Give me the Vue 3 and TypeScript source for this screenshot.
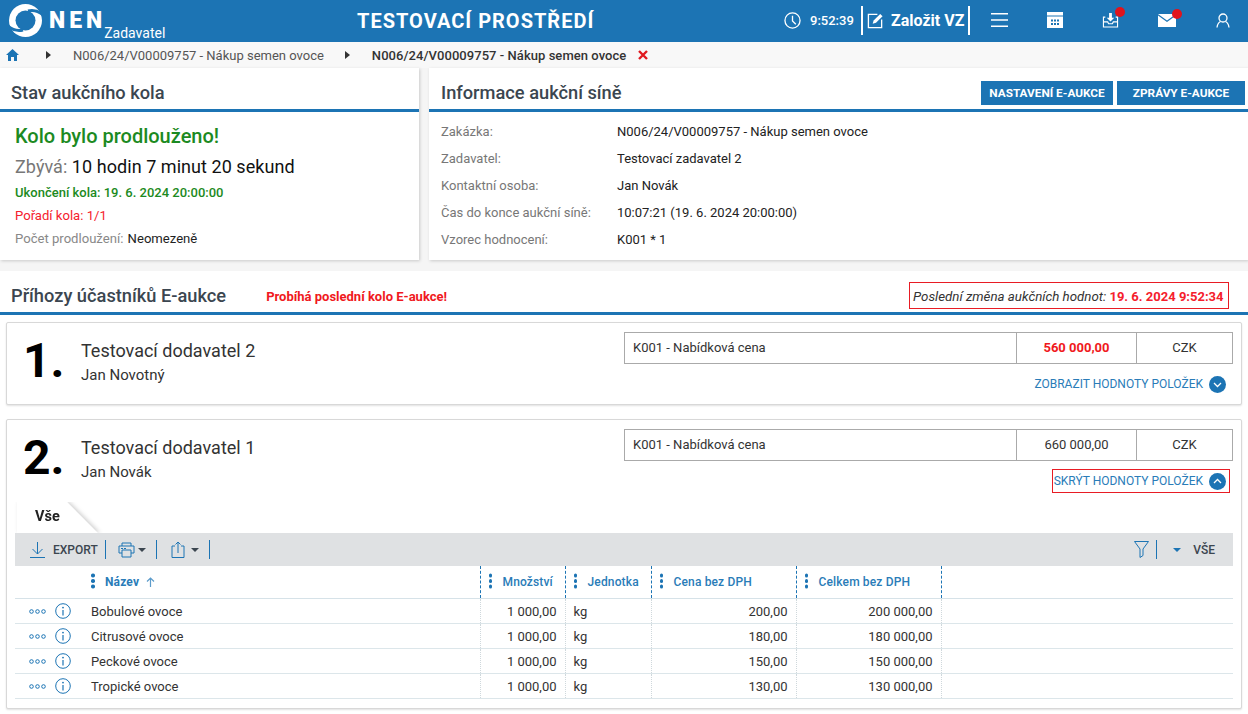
<script setup lang="ts">
interface Row { name: string; qty: string; unit: string; price: string; total: string }
const rows: Row[] = [
  { name: 'Bobulové ovoce', qty: '1 000,00', unit: 'kg', price: '200,00', total: '200 000,00' },
  { name: 'Citrusové ovoce', qty: '1 000,00', unit: 'kg', price: '180,00', total: '180 000,00' },
  { name: 'Peckové ovoce', qty: '1 000,00', unit: 'kg', price: '150,00', total: '150 000,00' },
  { name: 'Tropické ovoce', qty: '1 000,00', unit: 'kg', price: '130,00', total: '130 000,00' },
]
const info: [string, string][] = [
  ['Zakázka:', 'N006/24/V00009757 - Nákup semen ovoce'],
  ['Zadavatel:', 'Testovací zadavatel 2'],
  ['Kontaktní osoba:', 'Jan Novák'],
  ['Čas do konce aukční síně:', '10:07:21 (19. 6. 2024 20:00:00)'],
  ['Vzorec hodnocení:', 'K001 * 1'],
]
</script>

<template>
  <div class="page">
    <header class="top">
      <div class="brand">
        <svg class="logo" viewBox="0 0 33 33" width="33" height="33">
          <circle cx="16.500" cy="16.500" r="16.500" fill="#fff" />
          <circle cx="16.500" cy="16.500" r="10" fill="#1c74b4" />
          <path d="M19 7 Q27 5 34 11" fill="none" stroke="#1c74b4" stroke-width="3" />
          <path d="M14 26 Q6 28 -1 22" fill="none" stroke="#1c74b4" stroke-width="3" />
        </svg>
        <span class="nen">NEN</span>
        <span class="role">Zadavatel</span>
      </div>
      <div class="env">TESTOVACÍ PROSTŘEDÍ</div>
      <div class="tools">
        <svg class="clock" viewBox="0 0 18 18" width="17" height="17"><circle cx="9" cy="9" r="8" fill="none" stroke="#fff" stroke-width="1.400"/><path d="M9 4V9.500L12.500 13" fill="none" stroke="#fff" stroke-width="1.400"/></svg>
        <span class="time">9:52:39</span>
        <div class="create">
          <svg viewBox="0 0 18 18" width="17" height="17"><path d="M11 2.500H1.500V16.500H15.500V8" fill="none" stroke="#fff" stroke-width="1.400"/><path d="M6 12.500L7 9L14 2L16.500 4.500L9.500 11.500Z" fill="#fff"/></svg>
          <span>Založit VZ</span>
        </div>
        <svg class="i-menu" viewBox="0 0 17 14" width="17" height="14"><path d="M0 0.800H17M0 7H17M0 13.200H17" stroke="#fff" stroke-width="1.500"/></svg>
        <svg class="i-cal" viewBox="0 0 16 16" width="16" height="16"><path d="M0 0H16V3.500H0Z M0 4.500H16V16H0Z" fill="#fff"/><path d="M4 7.500h2v2H4zM7 7.500h2v2H7zM10 7.500h2v2h-2zM4 11h2v2H4zM7 11h2v2H7zM10 11h2v2h-2z" fill="#1c74b4"/></svg>
        <div class="badged b-inbox">
          <svg viewBox="0 0 17 17" width="17" height="16"><path d="M3 5.500H1V16H16V5.500H14M1 10.500H5.500L6.500 12.500H10.500L11.500 10.500H16" fill="none" stroke="#fff" stroke-width="1.200"/><path d="M7 1H10V6H12.500L8.500 10L4.500 6H7Z" fill="#fff"/></svg>
          <i class="dot"></i>
        </div>
        <div class="badged b-mail">
          <svg viewBox="0 0 18 13" width="18" height="13"><path d="M0 0H18L9 6.500Z M0 1.500L9 8L18 1.500V13H0Z" fill="#fff"/></svg>
          <i class="dot"></i>
        </div>
        <svg class="i-user" viewBox="0 0 14 15" width="14" height="15"><circle cx="7" cy="5" r="4" fill="none" stroke="#fff" stroke-width="1.300"/><path d="M1 14.500C1.500 10.500 3.500 9 4.500 8.500M13 14.500C12.500 10.500 10.500 9 9.500 8.500" fill="none" stroke="#fff" stroke-width="1.300"/></svg>
      </div>
    </header>

    <nav class="crumbs">
      <svg class="home" viewBox="0 0 13 12" width="13" height="12"><path d="M6.500 0L13 6H11V12H8V8H5V12H2V6H0Z" fill="#1c74b4"/></svg>
      <span class="arrow a1"></span>
      <span class="crumb">N006/24/V00009757 - Nákup semen ovoce</span>
      <span class="arrow a2"></span>
      <strong class="crumb-b">N006/24/V00009757 - Nákup semen ovoce</strong>
      <svg class="close" viewBox="0 0 10 10" width="10" height="10"><path d="M1 1L9 9M9 1L1 9" stroke="#e0191f" stroke-width="2.400"/></svg>
    </nav>

    <section class="panels">
      <div class="panel left">
        <h2 class="ptitle">Stav aukčního kola</h2>
        <div class="left-body">
          <div class="big-green">Kolo bylo prodlouženo!</div>
          <div class="remain"><span>Zbývá:</span> 10 hodin 7 minut 20 sekund</div>
          <div class="l-row green">Ukončení kola: <b>19. 6. 2024 20:00:00</b></div>
          <div class="l-row red">Pořadí kola: 1/1</div>
          <div class="l-row grey">Počet prodloužení: <em>Neomezeně</em></div>
        </div>
      </div>
      <div class="panel right">
        <div class="ptitle rt">
          <h2>Informace aukční síně</h2>
          <div class="btns">
            <button class="btn b1">NASTAVENÍ E-AUKCE</button>
            <button class="btn b2">ZPRÁVY E-AUKCE</button>
          </div>
        </div>
        <div class="info">
          <div v-for="r in info" :key="r[0]" class="info-row">
            <span class="k">{{ r[0] }}</span><span class="v">{{ r[1] }}</span>
          </div>
        </div>
      </div>
    </section>

    <section class="bids">
      <div class="bids-head">
        <h2>Příhozy účastníků E-aukce</h2>
        <span class="last">Probíhá poslední kolo E-aukce!</span>
        <span class="changed"><i>Poslední změna aukčních hodnot:</i> <b>19. 6. 2024 9:52:34</b></span>
      </div>

      <article class="card c1">
        <div class="card-top">
          <div class="rank">1<span>.</span></div>
          <div class="who">
            <div class="sup">Testovací dodavatel 2</div>
            <div class="per">Jan Novotný</div>
          </div>
          <div class="side">
            <div class="vals">
              <span class="c-a">K001 - Nabídková cena</span>
              <span class="c-b win">560 000,00</span>
              <span class="c-c">CZK</span>
            </div>
            <div class="toggle">
              <span>ZOBRAZIT HODNOTY POLOŽEK</span>
              <svg viewBox="0 0 17 17" width="17" height="17"><circle cx="8.500" cy="8.500" r="8.500" fill="#1c74b4"/><path d="M5 7L8.500 10.500L12 7" fill="none" stroke="#fff" stroke-width="1.300"/></svg>
            </div>
          </div>
        </div>
      </article>

      <article class="card c2">
        <div class="card-top">
          <div class="rank">2<span>.</span></div>
          <div class="who">
            <div class="sup">Testovací dodavatel 1</div>
            <div class="per">Jan Novák</div>
          </div>
          <div class="side">
            <div class="vals">
              <span class="c-a">K001 - Nabídková cena</span>
              <span class="c-b">660 000,00</span>
              <span class="c-c">CZK</span>
            </div>
            <div class="toggle focus">
              <span>SKRÝT HODNOTY POLOŽEK</span>
              <svg viewBox="0 0 17 17" width="17" height="17"><circle cx="8.500" cy="8.500" r="8.500" fill="#1c74b4"/><path d="M5 10L8.500 6.500L12 10" fill="none" stroke="#fff" stroke-width="1.300"/></svg>
            </div>
          </div>
        </div>

        <div class="tabs"><div class="tab-shadow"><div class="tab">Vše</div></div></div>
        <div class="toolbar">
          <svg class="t-exp" viewBox="0 0 15 16" width="15" height="16"><path d="M7.500 0V12M2.500 7L7.500 12L12.500 7M0 15.500H15" fill="none" stroke="#1c74b4" stroke-width="1"/></svg>
          <span class="t-label">EXPORT</span>
          <i class="sep"></i>
          <svg class="t-print" viewBox="0 0 17 16" width="17" height="16"><path d="M4 4V1H13V4M4 11H1V4H16V11H13M4 8H13V15H4Z" fill="none" stroke="#1c74b4" stroke-width="1"/><path d="M3 6h2v1H3zM6 6h2v1H6z" fill="#1c74b4"/></svg>
          <i class="caret"></i>
          <i class="sep"></i>
          <svg class="t-share" viewBox="0 0 14 17" width="14" height="17"><path d="M4 5H1V16.500H13V5H10M7 12V1M4.500 3.500L7 1L9.500 3.500" fill="none" stroke="#1c74b4" stroke-width="1"/></svg>
          <i class="caret c-share"></i>
          <i class="sep"></i>
          <span class="grow"></span>
          <svg class="t-filter" viewBox="0 0 15 17" width="15" height="17"><path d="M0.500 0.500H14.500L9 8V14.500L6 16.500V8Z" fill="none" stroke="#1c74b4" stroke-width="1"/></svg>
          <i class="sep s-r"></i>
          <i class="caret blue"></i>
          <span class="t-label all">VŠE</span>
        </div>

        <table class="grid">
          <colgroup>
            <col class="w-a" /><col class="w-b" /><col class="w-c" /><col class="w-d" /><col class="w-e" /><col class="w-e" /><col />
          </colgroup>
          <thead>
            <tr>
              <th></th>
              <th><i class="dots"></i>Název<svg class="sort" viewBox="0 0 9 10" width="9" height="10"><path d="M4.500 10V1M1 4.500L4.500 1L8 4.500" fill="none" stroke="#5d9ccb" stroke-width="1.200"/></svg></th>
              <th class="ln"><i class="dots"></i>Množství</th>
              <th class="ln"><i class="dots"></i>Jednotka</th>
              <th class="ln"><i class="dots"></i>Cena bez DPH</th>
              <th class="ln"><i class="dots"></i>Celkem bez DPH</th>
              <th class="ln"></th>
            </tr>
          </thead>
          <tbody>
            <tr v-for="r in rows" :key="r.name">
              <td class="acts">
                <svg viewBox="0 0 17 5" width="17" height="5"><circle cx="2.500" cy="2.500" r="1.800" fill="none" stroke="#1c74b4" stroke-width="1"/><circle cx="8.500" cy="2.500" r="1.800" fill="none" stroke="#1c74b4" stroke-width="1"/><circle cx="14.500" cy="2.500" r="1.800" fill="none" stroke="#1c74b4" stroke-width="1"/></svg>
                <svg class="inf" viewBox="0 0 16 16" width="16" height="16"><circle cx="8" cy="8" r="7.300" fill="none" stroke="#1c74b4" stroke-width="1"/><path d="M8 7V12.500" stroke="#1c74b4" stroke-width="1.200"/><circle cx="8" cy="4.600" r="0.900" fill="#1c74b4"/></svg>
              </td>
              <td class="nm">{{ r.name }}</td>
              <td class="num ln">{{ r.qty }}</td>
              <td class="ln unit">{{ r.unit }}</td>
              <td class="num ln">{{ r.price }}</td>
              <td class="num ln">{{ r.total }}</td>
              <td class="ln"></td>
            </tr>
          </tbody>
        </table>
      </article>
    </section>
  </div>
</template>

<style>
html, body { margin: 0; padding: 0; background: #fff; }
</style>

<style scoped>
.page { width: 1248px; height: 714px; overflow: hidden; font-family: Roboto, "Liberation Sans", sans-serif; color: #2b2b2b; background: #fff; }
h2 { margin: 0; font-size: 18.250px; font-weight: 500; color: #3b4650; }
.top { height: 42px; background: #1c74b4; display: flex; align-items: center; position: relative; color: #fff; }
.brand { display: flex; align-items: center; width: 300px; position: relative; height: 42px; }
.logo { margin-left: 9px; margin-top: -2px; }
.nen { font-size: 23px; font-weight: 900; letter-spacing: 4px; margin-left: 7px; margin-top: -1px; line-height: 26px; }
.role { font-size: 14px; margin-left: -2px; margin-top: 24px; line-height: 16px; }
.env { position: absolute; left: 357px; top: 9px; font-size: 20px; font-weight: 700; letter-spacing: 1px; line-height: 24px; white-space: nowrap; }
.tools { margin-left: auto; display: flex; align-items: center; height: 42px; padding-bottom: 2px; box-sizing: border-box; }
.clock { margin-right: 9px; }
.time { font-size: 13px; font-weight: 500; width: 51px; }
.create { display: flex; align-items: center; height: 29px; border-left: 2px solid #fff; border-right: 2px solid #fff; padding: 0 0 0 4px; width: 109px; box-sizing: border-box; font-size: 16px; font-weight: 700; gap: 7px; white-space: nowrap; }
.i-menu { margin-left: 21px; }
.i-cal { margin-left: 39px; }
.badged { position: relative; display: flex; }
.b-inbox { margin-left: 39px; }
.b-mail { margin-left: 39px; }
.dot { position: absolute; width: 10px; height: 10px; border-radius: 50%; background: #e0141c; top: -5px; right: -6px; }
.i-user { margin-left: 40px; margin-right: 18px; }

.crumbs { height: 26px; background: #f8f8f8; display: flex; align-items: center; font-size: 13px; color: #555; }
.home { margin-left: 6px; }
.arrow { width: 0; height: 0; border-left: 5px solid #333; border-top: 4px solid transparent; border-bottom: 4px solid transparent; }
.a1 { margin-left: 27px; }
.crumb { margin-left: 22px; }
.a2 { margin-left: 21px; }
.crumb-b { margin-left: 22px; color: #333; font-weight: 500; letter-spacing: 0.050px; }
.close { margin-left: 12px; }

.panels { display: flex; height: 203px; background: #f5f5f5; gap: 10px; }
.panel { background: #fff; height: 192px; box-shadow: 1px 1px 3px rgba(0,0,0,.18); }
.left { width: 419px; }
.right { flex: 1; }
.ptitle { height: 41px; border-bottom: 3px solid #1c74b4; font-size: 18.250px; font-weight: 500; color: #3b4650; margin: 0; padding-left: 11px; line-height: 49px; box-sizing: content-box; }
.rt { display: flex; justify-content: space-between; padding-left: 12px; padding-right: 3px; }
.rt h2 { line-height: 49px; }
.btns { display: flex; gap: 4px; padding-top: 13px; }
.btn { height: 24px; border: 0; background: #1c74b4; color: #fff; font-family: inherit; font-size: 11.800px; font-weight: 700; padding: 0; }
.b1 { width: 132px; }
.b2 { width: 128px; }
.left-body { padding: 12px 0 0 15px; }
.big-green { font-size: 20px; color: #1c8a22; line-height: 24px; font-weight: 500; }
.remain { font-size: 18px; line-height: 24px; margin-top: 7px; color: #111; letter-spacing: 0.050px; }
.remain span { color: #777; }
.l-row { font-size: 13.100px; line-height: 16px; margin-top: 7px; }
.green { color: #1c8a22; font-size: 13px; font-weight: 500; margin-top: 6px; }
.green b { font-weight: 500; }
.red { color: #f5202c; }
.grey { color: #888; }
.grey em { font-style: normal; color: #222; margin-left: 1px; }
.info { padding: 6px 0 0 12px; }
.info-row { height: 27px; display: flex; align-items: center; font-size: 13px; }
.k { width: 176px; color: #777; }
.v { color: #222; }

.bids-head { height: 41px; border-bottom: 3px solid #1c74b4; display: flex; align-items: center; position: relative; padding-left: 11px; }
.bids-head h2 { margin-top: 8px; }
.last { color: #f01820; font-size: 13px; font-weight: 700; margin-left: 40px; margin-top: 10px; }
.changed { position: absolute; left: 909px; top: 11px; width: 320px; height: 27px; box-sizing: border-box; border: 1px solid #e81c24; font-size: 13px; line-height: 27px; padding-left: 3px; color: #333; white-space: nowrap; }
.changed i { font-size: 13.300px; }
.changed b { color: #f5202c; font-weight: 700; }
.card { margin: 7px 6px 0; width: 1236px; box-sizing: border-box; background: #fff; border: 1px solid #d8d8d8; border-radius: 2px; box-shadow: 0 1px 2px rgba(0,0,0,.12); }
.c1 { height: 83px; }
.c2 { height: 290px; margin-top: 14px; }
.card-top { display: flex; position: relative; height: 78px; }
.rank { width: 74px; padding-left: 16px; box-sizing: border-box; font-size: 48px; font-weight: 700; color: #000; line-height: 76px; }
.who { padding-top: 17px; }
.sup { font-size: 18px; line-height: 22px; color: #333; }
.per { font-size: 15px; line-height: 18px; margin-top: 4px; color: #333; }
.side { position: absolute; left: 617px; top: 9px; width: 609px; }
.vals { display: flex; height: 32px; border: 1px solid #aaa; box-sizing: border-box; font-size: 13px; line-height: 30px; color: #333; }
.c-a { width: 391px; padding-left: 8px; box-sizing: border-box; }
.c-b { width: 119px; text-align: center; border-left: 1px solid #aaa; border-right: 1px solid #aaa; }
.c-c { flex: 1; text-align: center; }
.win { color: #f01820; font-weight: 700; }
.toggle { position: absolute; right: 3px; top: 40px; height: 24px; box-sizing: border-box; display: flex; align-items: center; gap: 6px; padding: 0 3px 0 1px; color: #2a7cb8; font-size: 12px; font-weight: 400; border: 1px solid transparent; white-space: nowrap; }
.focus { border-color: #e81c24; }
.tabs { height: 31px; padding-left: 0; margin-top: 4px; overflow: hidden; }
.tab-shadow { width: 90px; height: 31px; margin-left: 10px; filter: drop-shadow(2px 0 2px rgba(0,0,0,.2)); }
.tab { width: 81px; height: 31px; padding-left: 18px; box-sizing: border-box; font-size: 14.500px; font-weight: 700; color: #222; line-height: 30px; background: #fff; clip-path: polygon(0 0, 62% 0, 100% 100%, 0 100%); }
.toolbar { margin: 0 8px; height: 33px; background: #dfe1e3; display: flex; align-items: center; }
.t-exp { margin-left: 15px; }
.t-label { font-size: 12px; font-weight: 500; color: #3c4650; margin-left: 8px; }
.sep { width: 1px; height: 19px; background: #1c74b4; margin-left: 7px; }
.t-print { margin-left: 12px; }
.caret { width: 0; height: 0; border-top: 4.500px solid #3c4650; border-left: 4.500px solid transparent; border-right: 4.500px solid transparent; margin-left: 3px; }
.t-share { margin-left: 14px; }
.c-share { margin-left: 6px; }
.caret + .sep { margin-left: 10px; }
.grow { flex: 1; }
.s-r { margin-left: 7px; }
.blue { border-top-color: #1c74b4; margin-left: 16px; }
.all { margin-left: 12px; margin-right: 18px; }
.grid { margin: 0 8px; width: 1218px; border-collapse: collapse; table-layout: fixed; font-size: 13px; }
.w-a { width: 66px; }
.w-b { width: 399px; }
.w-c { width: 85px; }
.w-d { width: 86px; }
.w-e { width: 145px; }
.grid th { height: 32px; padding: 0 0 0 12px; box-sizing: border-box; text-align: left; color: #2a7cb8; font-size: 12px; font-weight: 500; letter-spacing: 0.150px; border-bottom: 1px solid #d6e2e8; position: relative; white-space: nowrap; }
.grid td { height: 25px; padding: 1px 0 0; box-sizing: border-box; border-bottom: 1px solid #dce6ea; color: #333; }
.grid th.ln { border-left: 1px dashed #1c74b4; }
.grid td.ln { border-left: 1px dotted #cfd8dc; }
.dots { display: inline-block; width: 3.500px; height: 3.500px; border-radius: 50%; background: #1c74b4; box-shadow: 0 -5.500px #1c74b4, 0 5.500px #1c74b4; margin-right: 10.500px; vertical-align: 3px; margin-left: -4px; }
.grid th:nth-child(2) { padding-left: 14px; font-weight: 700; }
.sort { margin-left: 7px; vertical-align: -1px; }
.acts { white-space: nowrap; }
.acts svg { vertical-align: middle; }
.acts svg:first-child { margin-left: 14px; }
.inf { margin-left: 9px; }
.grid td.nm { padding-left: 10px; }
.grid td.num { text-align: right; padding-right: 8px; }
.grid td.unit { padding-left: 8px; }
</style>
